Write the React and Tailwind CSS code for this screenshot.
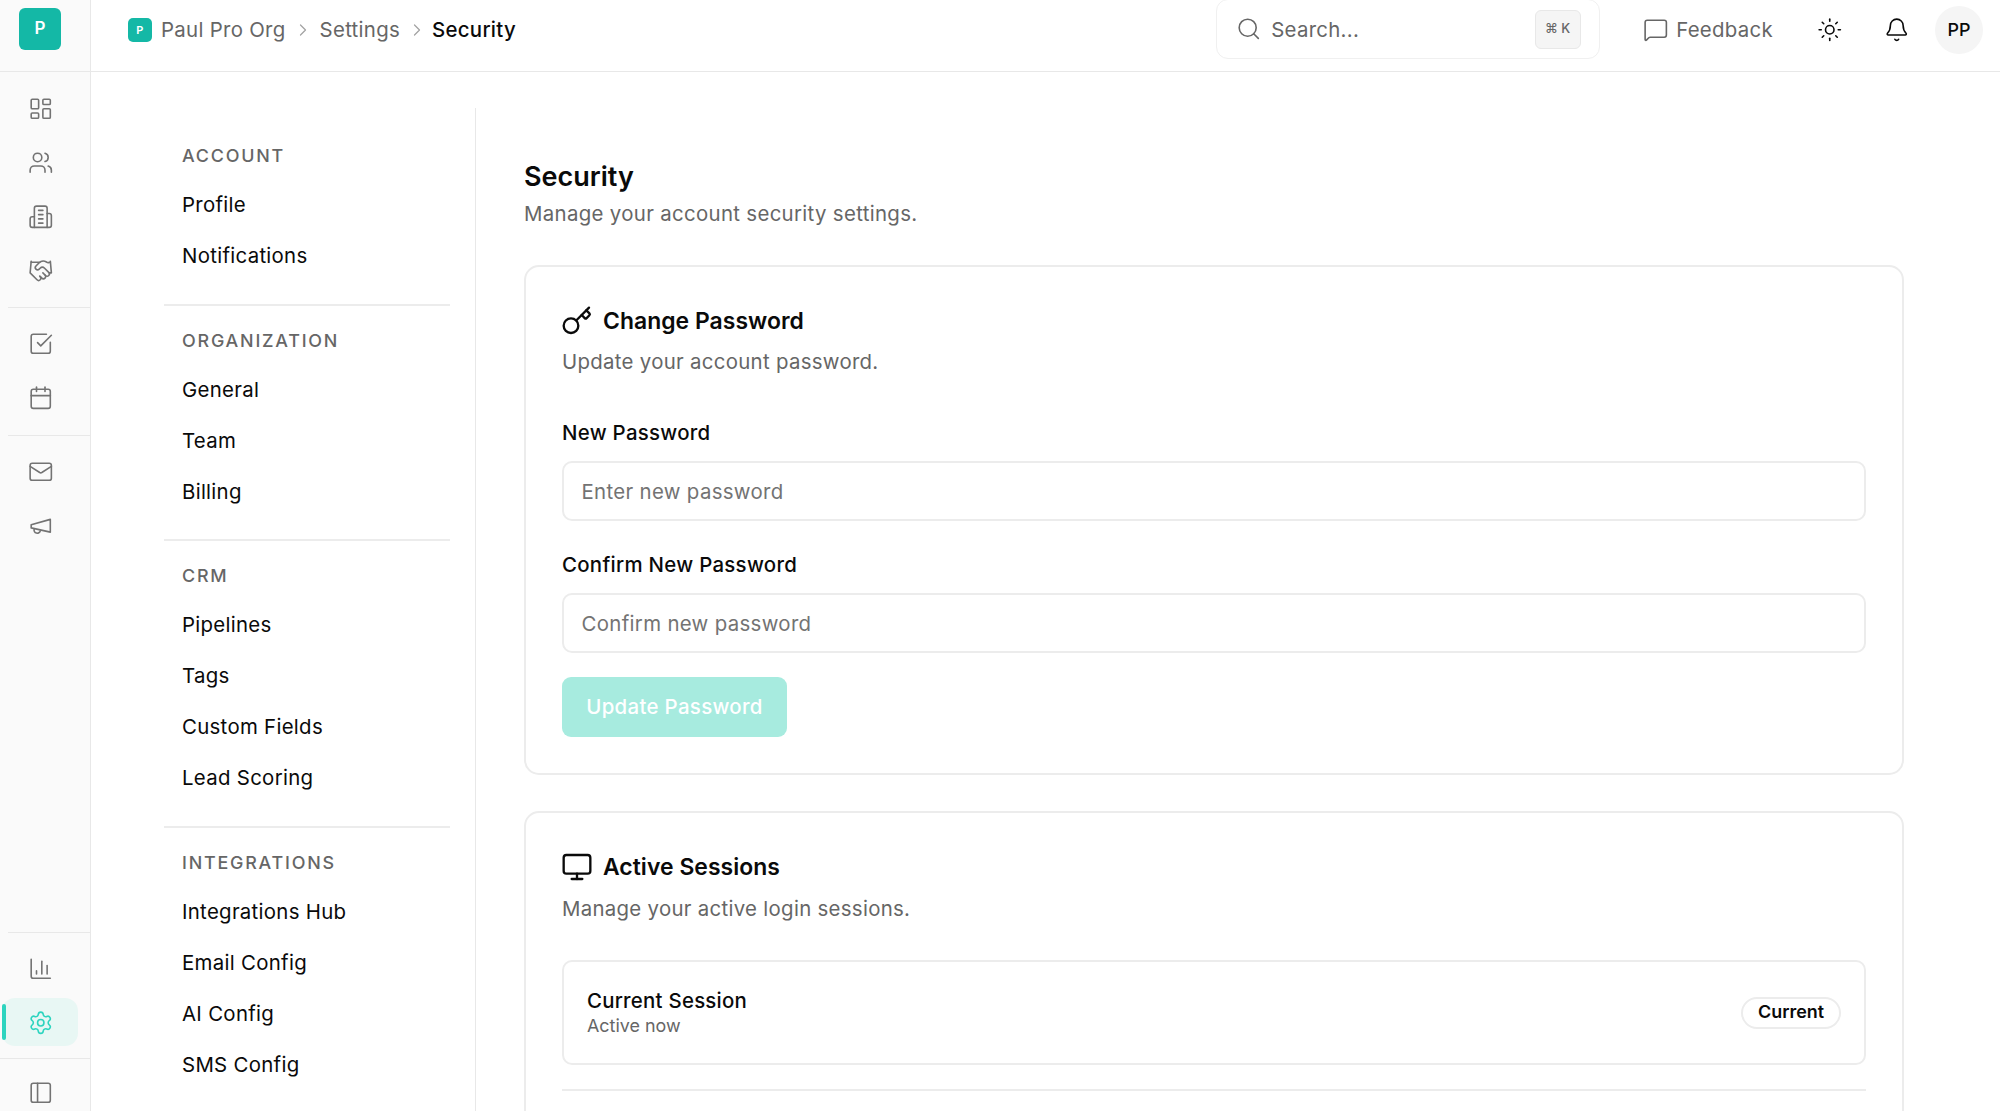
import {
  Bell, Calendar, ChartColumn, ChevronRight, Handshake, Key, LayoutDashboard, Mail,
  MessageSquare, Monitor, PanelLeft, Search, Settings, SquareCheckBig, Sun, Users,
} from 'lucide-react';

function Building({ size, strokeWidth }) {
  return (
    <svg width={size} height={size} viewBox="0 0 24 24" fill="none" stroke="currentColor" strokeWidth={strokeWidth} strokeLinecap="round" strokeLinejoin="round">
      <path d="M6 22V4a2 2 0 0 1 2-2h8a2 2 0 0 1 2 2v18Z" />
      <path d="M6 12H4a2 2 0 0 0-2 2v6a2 2 0 0 0 2 2h2" />
      <path d="M18 9h2a2 2 0 0 1 2 2v9a2 2 0 0 1-2 2h-2" />
      <path d="M10 6h4" />
      <path d="M10 10h4" />
      <path d="M10 14h4" />
      <path d="M10 18h4" />
    </svg>
  );
}

function Horn({ size, strokeWidth }) {
  return (
    <svg width={size} height={size} viewBox="0 0 24 24" fill="none" stroke="currentColor" strokeWidth={strokeWidth} strokeLinecap="round" strokeLinejoin="round">
      <path d="m3 11 18-5v12L3 14v-3z" />
      <path d="M11.6 16.8a3 3 0 1 1-5.8-1.6" />
    </svg>
  );
}

const navSections = [
  { label: 'Account', items: ['Profile', 'Notifications'] },
  { label: 'Organization', items: ['General', 'Team', 'Billing'] },
  { label: 'CRM', items: ['Pipelines', 'Tags', 'Custom Fields', 'Lead Scoring'] },
  { label: 'Integrations', items: ['Integrations Hub', 'Email Config', 'AI Config', 'SMS Config'] },
];

const railGroups = [
  [LayoutDashboard, Users, Building, Handshake],
  [SquareCheckBig, Calendar],
  [Mail, Horn],
];

function RailButton({ icon: Icon, active }) {
  return (
    <button className={`relative flex h-[48px] w-[76px] items-center justify-center rounded-[13px] ml-[2px] pl-[1.5px] pt-[1px] ${active ? 'bg-[#e8f7f4] text-[#2dd4bf]' : 'text-[#737373]'}`}>
      {active && <span className="absolute left-0 top-[6px] h-[36px] w-[4px] rounded-full bg-[#2dd4bf]" />}
      <Icon size={25.5} strokeWidth={1.5} />
    </button>
  );
}

function Rail() {
  return (
    <aside className="flex h-full w-[91px] shrink-0 flex-col border-r border-[#e8e8e8] bg-[#fafafa]">
      <div className="flex h-[72px] shrink-0 border-b border-[#e8e8e8] pl-[19px] pt-[8px]">
        <div className="flex h-[42px] w-[42px] items-center justify-center rounded-[6px] bg-[#14b8a6] text-[17px] font-semibold text-white">P</div>
      </div>
      <div className="flex-1 pt-[12px]">
        {railGroups.map((group, i) => (
          <div key={i} className={i < railGroups.length - 1 ? 'mb-[11.5px] ml-[8px] border-b border-[#e8e8e8] pb-[13px]' : ''}>
            <div className={`flex flex-col gap-[6px] ${i < railGroups.length - 1 ? '-ml-[8px]' : ''}`}>
              {group.map((Icon, j) => <RailButton key={j} icon={Icon} />)}
            </div>
          </div>
        ))}
      </div>
      <div className="ml-[8px] shrink-0 border-t border-[#e8e8e8] pt-[11px]">
        <div className="-ml-[8px] flex flex-col gap-[6px]">
          <RailButton icon={ChartColumn} />
          <RailButton icon={Settings} active />
        </div>
        <div className="mt-[12px] border-t border-[#e8e8e8] pb-[5.5px] pt-[21px] -ml-[8px] pl-[28px] text-[#737373]">
          <PanelLeft size={25.5} strokeWidth={1.5} />
        </div>
      </div>
    </aside>
  );
}

function Header() {
  return (
    <header className="flex h-[72px] shrink-0 items-start border-b border-[#e8e8e8] pl-[37px] pr-[17px]">
      <nav className="flex h-[60px] items-center text-[20.4px] tracking-[0.3px] text-[#666666]">
        <span className="flex h-[24px] w-[24px] items-center justify-center rounded-[5px] bg-[#14b8a6] text-[11px] font-semibold text-white">P</span>
        <span className="ml-[9px]">Paul Pro Org</span>
        <ChevronRight size={20} strokeWidth={1.5} className="ml-[7px] mr-[7px] text-[#a3a3a3]" />
        <span>Settings</span>
        <ChevronRight size={20} strokeWidth={1.5} className="ml-[7px] mr-[5px] text-[#a3a3a3]" />
        <span className="font-medium text-[#0a0a0a]">Security</span>
      </nav>
      <div className="ml-auto flex h-[60px] items-center">
        <div className="-mt-[2px] flex h-[60px] w-[384px] items-center rounded-[12px] border border-[#f0f0f0] pl-[19px] pr-[18px] text-[#666666]">
          <Search size={25.5} strokeWidth={1.5} />
          <span className="ml-[10px] mt-[2px] text-[20.4px] tracking-[0.3px]">Search...</span>
          <span className="ml-auto flex h-[39px] w-[46px] items-center justify-center rounded-[6px] border border-[#e8e8e8] bg-[#f5f5f5] text-[13px] font-medium text-[#666666]">⌘ K</span>
        </div>
        <button className="ml-[43px] flex items-center text-[20.4px] tracking-[0.3px] text-[#666666]">
          <MessageSquare size={25.5} strokeWidth={1.5} />
          <span className="ml-[8px]">Feedback</span>
        </button>
        <Sun size={25.5} strokeWidth={1.5} className="ml-[44px] text-[#0a0a0a]" />
        <Bell size={25.5} strokeWidth={1.5} className="ml-[41px] text-[#0a0a0a]" />
        <div className="ml-[26px] flex h-[48px] w-[48px] items-center justify-center rounded-full bg-[#f5f5f5] text-[17.9px] font-medium text-[#0a0a0a]">PP</div>
      </div>
    </header>
  );
}

function SettingsNav() {
  return (
    <div className="h-full w-[385px] shrink-0 border-r border-[#e8e8e8] pl-[73px] pr-[25px] pt-[36px]">
      {navSections.map((section, i) => (
        <div key={section.label} className={i > 0 ? 'mt-[22.6px] border-t-[2px] border-[#ececec] pt-[23px]' : ''}>
          <div className="px-[18px] text-[17.9px] font-medium uppercase leading-[23px] tracking-[0.1em] text-[#666666]">{section.label}</div>
          <div className="mt-[12px]">
            {section.items.map(item => (
              <a key={item} className="block h-[51px] px-[18px] text-[20.4px] leading-[51px] tracking-[0.3px] text-[#0a0a0a]">{item}</a>
            ))}
          </div>
        </div>
      ))}
    </div>
  );
}

function Field({ label, placeholder, className }) {
  return (
    <div className={className}>
      <label className="block text-[20.4px] font-medium leading-[24px] tracking-[0.3px] text-[#0a0a0a]">{label}</label>
      <input
        type="password"
        placeholder={placeholder}
        className="mt-[16px] block h-[60px] w-full rounded-[10px] border-[2px] border-[#ececec] px-[17.5px] text-[20.4px] tracking-[0.33px] outline-none placeholder:text-[#737373]"
      />
    </div>
  );
}

function CardTitle({ icon: Icon, title, sub, subClass }) {
  return (
    <>
      <div className="flex h-[28px] items-center">
        <Icon size={32} strokeWidth={1.75} className="-ml-[1.5px] text-[#0a0a0a]" />
        <h2 className="ml-[10.5px] text-[22.9px] font-semibold tracking-[0.05px] text-[#0a0a0a]">{title}</h2>
      </div>
      <p className={`${subClass} text-[20.4px] leading-[26px] tracking-[0.3px] text-[#666666]`}>{sub}</p>
    </>
  );
}

function Card({ children, className }) {
  return <section className={`rounded-[15px] border-[2px] border-[#ececec] bg-white px-[36px] ${className}`}>{children}</section>;
}

export default function App() {
  return (
    <div className="flex h-[1111px] w-full overflow-hidden bg-white font-['Inter',sans-serif]">
      <Rail />
      <div className="flex min-w-0 flex-1 flex-col">
        <Header />
        <main className="flex min-h-0 flex-1 pt-[36px]">
          <SettingsNav />
          <div className="ml-[48px] w-[1380px] shrink-0 pt-[51px]">
            <h1 className="text-[27px] font-semibold leading-[36px] text-[#0a0a0a]">Security</h1>
            <p className="mt-[6px] text-[20.4px] leading-[26px] tracking-[0.33px] text-[#666666]">Manage your account security settings.</p>

            <Card className="mt-[38px] pb-[36px] pt-[40px]">
              <CardTitle icon={Key} title="Change Password" sub="Update your account password." subClass="mt-[14px]" />
              <Field className="mt-[46px]" label="New Password" placeholder="Enter new password" />
              <Field className="mt-[32px]" label="Confirm New Password" placeholder="Confirm new password" />
              <button className="mt-[24px] h-[60px] w-[225px] rounded-[9px] bg-[#a7ebdf] text-[20.4px] font-medium tracking-[0.33px] text-white">Update Password</button>
            </Card>

            <Card className="mt-[36px] pb-[40px] pt-[40px]">
              <CardTitle icon={Monitor} title="Active Sessions" sub="Manage your active login sessions." subClass="mt-[15px]" />
              <div className="mt-[38px] flex h-[105px] items-center justify-between rounded-[10px] border-[2px] border-[#ececec] pl-[23px] pr-[23px]">
                <div>
                  <div className="text-[20.4px] font-medium leading-[26px] tracking-[0.25px] text-[#0a0a0a]">Current Session</div>
                  <div className="text-[17.9px] leading-[24px] text-[#666666]">Active now</div>
                </div>
                <span className="flex h-[32px] w-[100px] items-center justify-center rounded-full border-[2px] border-[#ececec] text-[17.9px] font-semibold text-[#0a0a0a]">Current</span>
              </div>
              <div className="mt-[24px] border-t-[2px] border-[#ececec]" />
            </Card>
          </div>
        </main>
      </div>
    </div>
  );
}
